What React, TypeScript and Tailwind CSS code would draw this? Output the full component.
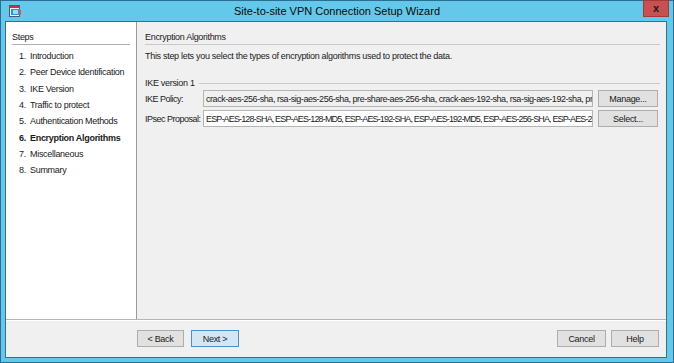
const steps = [
  'Introduction',
  'Peer Device Identification',
  'IKE Version',
  'Traffic to protect',
  'Authentication Methods',
  'Encryption Algorithms',
  'Miscellaneous',
  'Summary',
]

const ACTIVE = 5

function WinButton({ label, primary }: { label: string; primary?: boolean }) {
  return (
    <div
      className={
        'flex items-center justify-center h-[17px] border text-[#1a1a1a] ' +
        (primary ? 'bg-[#d3e6f5] border-[#4e8fc4]' : 'bg-[#e1e1e1] border-[#adadad]')
      }
    >
      {label}
    </div>
  )
}

function AppIcon() {
  return (
    <svg width="14" height="14" viewBox="0 0 14 14">
      <rect x="1.5" y="1.5" width="10" height="11" fill="#f4f4f4" stroke="#4a5a7a" strokeWidth="1" />
      <rect x="2" y="2" width="9" height="2" fill="#c0392b" />
      <rect x="3" y="5" width="9" height="6" fill="#2f8fd8" />
      <rect x="5" y="6" width="5" height="4" fill="#8fe0ff" />
      <rect x="11" y="6" width="2" height="5" fill="#d9534f" />
    </svg>
  )
}

export default function App() {
  return (
    <div
      className="w-[674px] h-[363px] bg-[#63c8ea] border border-[#2a6f93] flex flex-col text-[9px] leading-[12px] tracking-[-0.3px] text-[#1a1a1a]"
      style={{ fontFamily: '"Liberation Sans", Arial, sans-serif' }}
    >
      <div className="relative h-[20px] flex items-center justify-center shrink-0">
        <div className="absolute left-[7px] top-[3px]">
          <AppIcon />
        </div>
        <span className="text-[11px] tracking-normal text-[#0a0a0a]">Site-to-site VPN Connection Setup Wizard</span>
        <div className="absolute right-[4px] top-[-1px] w-[26px] h-[17px] bg-[#c75050] border border-[#a33a3a] flex items-center justify-center">
          <span className="text-[11px] font-bold text-[#1a1a1a] leading-none">x</span>
        </div>
      </div>

      <div className="ml-[4px] mr-[6px] mb-[4px] flex-1 border border-[#3a6f8c] bg-[#f0f0f0] flex flex-col">
        <div className="h-[298px] flex border-b border-[#b4b4b4]">
          <div className="w-[131px] bg-white border-r border-[#9a9a9a] px-[6px] pt-[9px] whitespace-nowrap">
            <div className="pb-[1px] border-b border-[#b0b0b0]">Steps</div>
            <div className="mt-[3px] pl-[7px]">
              {steps.map((s, i) => (
                <div key={s} className={'flex h-[16.3px] items-center ' + (i === ACTIVE ? 'font-bold' : '')}>
                  <span className="w-[11px]">{i + 1}.</span>
                  <span>{s}</span>
                </div>
              ))}
            </div>
          </div>

          <div className="flex-1 pl-[8px] pr-[6px] pt-[9px]">
            <div className="pb-[1px] border-b border-[#c8c8c8]">Encryption Algorithms</div>
            <div className="mt-[5px]">This step lets you select the types of encryption algorithms used to protect the data.</div>

            <div className="mt-[15px] flex items-center gap-[4px]">
              <span>IKE version 1</span>
              <div className="flex-1 border-t border-[#c8c8c8]" />
            </div>

            <div className="mt-[1px] flex items-center h-[17px]">
              <span className="w-[58px] whitespace-nowrap tracking-[-0.5px]">IKE Policy:</span>
              <div className="w-[390px] h-[17px] border border-[#b4b4b4] bg-[#f0f0f0] px-[2px] flex items-center overflow-hidden whitespace-nowrap tracking-[-0.45px]">
                crack-aes-256-sha, rsa-sig-aes-256-sha, pre-share-aes-256-sha, crack-aes-192-sha, rsa-sig-aes-192-sha, pre-share-aes-192-sha, crack-aes-128-sha
              </div>
              <div className="ml-[5px] w-[60px]">
                <WinButton label="Manage..." />
              </div>
            </div>

            <div className="mt-[3px] flex items-center h-[17px]">
              <span className="w-[58px] whitespace-nowrap tracking-[-0.5px]">IPsec Proposal:</span>
              <div className="w-[390px] h-[17px] border border-[#b4b4b4] bg-white px-[2px] flex items-center overflow-hidden whitespace-nowrap tracking-[-0.85px]">
                ESP-AES-128-SHA, ESP-AES-128-MD5, ESP-AES-192-SHA, ESP-AES-192-MD5, ESP-AES-256-SHA, ESP-AES-256-MD5, ESP-3DES-SHA
              </div>
              <div className="ml-[5px] w-[60px]">
                <WinButton label="Select..." />
              </div>
            </div>
          </div>
        </div>

        <div className="flex-1 border-t border-white flex items-start pt-[9px]">
          <div className="ml-[131px] flex gap-[7px]">
            <div className="w-[47px]">
              <WinButton label="< Back" />
            </div>
            <div className="w-[48px]">
              <WinButton label="Next >" primary />
            </div>
          </div>
          <div className="ml-auto mr-[7px] flex gap-[5px]">
            <div className="w-[49px]">
              <WinButton label="Cancel" />
            </div>
            <div className="w-[48px]">
              <WinButton label="Help" />
            </div>
          </div>
        </div>
      </div>
    </div>
  )
}
